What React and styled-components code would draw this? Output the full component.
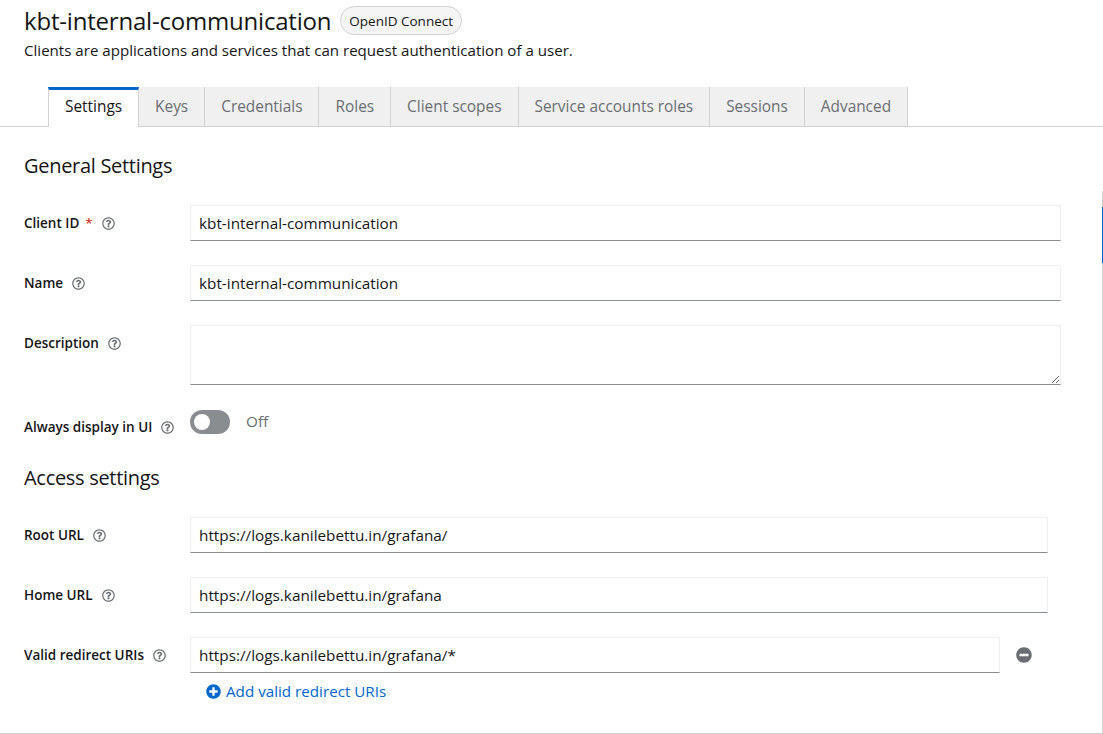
import React from 'react';
import styled, { createGlobalStyle } from 'styled-components';
import { FaRegQuestionCircle, FaMinusCircle, FaPlusCircle } from 'react-icons/fa';

const GlobalStyle = createGlobalStyle`
  html, body {
    margin: 0;
    padding: 0;
    background: #fff;
    font-family: "Open Sans", "Liberation Sans", sans-serif;
    color: #151515;
  }
  * { box-sizing: border-box; }
`;

const Page = styled.div`
  width: 1103px;
  height: 734px;
  overflow: hidden;
  display: flex;
  flex-direction: column;
`;

const Header = styled.div`
  padding: 6px 24px 0;
`;

const TitleRow = styled.div`
  display: flex;
  align-items: center;
  gap: 9px;
`;

const Title = styled.h1`
  margin: 0;
  font-size: 24px;
  font-weight: 400;
  line-height: 29px;
  letter-spacing: -0.2px;
`;

const Badge = styled.span`
  display: inline-flex;
  align-items: center;
  height: 29px;
  padding: 0 8px;
  border: 1px solid #d2d2d2;
  border-radius: 30px;
  background: #f5f5f5;
  font-size: 13.5px;
  color: #151515;
`;

const Subtitle = styled.p`
  margin: 5px 0 0;
  font-size: 15.1px;
  line-height: 21px;
`;

const TabList = styled.div`
  display: flex;
  margin-top: 26px;
  padding-left: 48px;
  border-bottom: 1px solid #d2d2d2;
`;

const Tab = styled.div`
  display: flex;
  align-items: center;
  padding: 0 16px;
  font-size: 15.4px;
  background: ${({ $active }) => ($active ? '#fff' : '#f0f0f0')};
  color: ${({ $active }) => ($active ? '#151515' : '#6a6e73')};
  border-right: 1px solid #d2d2d2;
  border-left: ${({ $active }) => ($active ? '1px solid #d2d2d2' : 'none')};
  border-top: ${({ $active }) => ($active ? '3px solid #0066cc' : 'none')};
  padding-bottom: ${({ $active }) => ($active ? '4px' : '0')};
  margin-bottom: ${({ $active }) => ($active ? '-1px' : '0')};
  height: ${({ $active }) => ($active ? '40px' : '39px')};
`;

const Body = styled.div`
  flex: 1;
  display: flex;
  border-bottom: 1px solid #d2d2d2;
  min-height: 0;
`;

const Main = styled.div`
  flex: 1;
  padding: 24px 41px 0 24px;
`;

const JumpNav = styled.div`
  width: 1px;
  margin-top: 64px;
  background: #d2d2d2;
`;

const JumpActive = styled.div`
  margin-top: 16px;
  height: 56px;
  background: #0066cc;
`;

const Section = styled.section`
  padding-right: ${({ $inset }) => $inset || 0}px;
  & + & {
    margin-top: 25px;
  }
`;

const SectionTitle = styled.h2`
  margin: 0 0 24px;
  font-size: 20px;
  font-weight: 400;
  line-height: 30px;
  letter-spacing: -0.3px;
`;

const Form = styled.div`
  display: grid;
  grid-template-columns: 166px 1fr;
  row-gap: 24px;
`;

const Label = styled.div`
  display: flex;
  align-items: center;
  gap: 9px;
  padding-top: 8px;
  font-size: 13.5px;
  font-weight: 600;
  line-height: 21px;
  align-self: start;
`;

const Required = styled.span`
  color: #c9190b;
  margin-left: -1px;
  font-weight: 400;
`;

const Help = styled(FaRegQuestionCircle)`
  color: #6a6e73;
  width: 13px;
  height: 13px;
`;

const Field = styled.div`
  display: flex;
  flex-direction: column;
  align-items: flex-start;
`;

const InputRow = styled.div`
  display: flex;
  align-items: center;
  width: 100%;
`;

const Input = styled.input`
  width: 100%;
  height: 36px;
  padding: 6px 8px;
  border: 1px solid #f0f0f0;
  border-bottom-color: #8a8d90;
  font: inherit;
  font-size: 15.3px;
  color: #151515;
  outline: none;
  background: #fff;
`;

const TextArea = styled.textarea`
  width: 100%;
  height: 60px;
  padding: 6px 8px;
  border: 1px solid #f0f0f0;
  border-bottom-color: #8a8d90;
  font: inherit;
  font-size: 15.3px;
  resize: vertical;
  outline: none;
  display: block;
`;

const RemoveButton = styled.button`
  flex: 0 0 48px;
  height: 36px;
  border: none;
  background: none;
  display: flex;
  align-items: center;
  justify-content: center;
  color: #6a6e73;
  padding: 0;
`;

const AddLink = styled.button`
  display: flex;
  align-items: center;
  gap: 5px;
  padding: 6px 16px;
  border: none;
  background: none;
  color: #0066cc;
  font: inherit;
  font-size: 15.2px;
  line-height: 24px;
`;

const ToggleWrap = styled.div`
  display: flex;
  align-items: center;
  gap: 16px;
  height: 24px;
  margin-top: 1px;
`;

const Track = styled.span`
  width: 40px;
  height: 24px;
  border-radius: 24px;
  background: #8a8d90;
  display: flex;
  align-items: center;
  padding: 0 4px;
`;

const Knob = styled.span`
  width: 16px;
  height: 16px;
  border-radius: 50%;
  background: #fff;
`;

const ToggleText = styled.span`
  font-size: 15.3px;
  color: #6a6e73;
  margin-top: -2px;
`;

const FieldLabel = ({ children, required }) => (
  <Label>
    <span>
      {children}
      {required && <Required> &nbsp;*</Required>}
    </span>
    <Help />
  </Label>
);

const tabs = ['Settings', 'Keys', 'Credentials', 'Roles', 'Client scopes', 'Service accounts roles', 'Sessions', 'Advanced'];

const App = () => (
  <Page>
    <GlobalStyle />
    <Header>
      <TitleRow>
        <Title>kbt-internal-communication</Title>
        <Badge>OpenID Connect</Badge>
      </TitleRow>
      <Subtitle>Clients are applications and services that can request authentication of a user.</Subtitle>
    </Header>
    <TabList>
      {tabs.map((t, i) => (
        <Tab key={t} $active={i === 0}>{t}</Tab>
      ))}
    </TabList>
    <Body>
      <Main>
        <Section>
          <SectionTitle>General Settings</SectionTitle>
          <Form>
            <FieldLabel required>Client ID</FieldLabel>
            <Field><Input defaultValue="kbt-internal-communication" /></Field>
            <FieldLabel>Name</FieldLabel>
            <Field><Input defaultValue="kbt-internal-communication" /></Field>
            <FieldLabel>Description</FieldLabel>
            <Field><TextArea /></Field>
            <FieldLabel>Always display in UI</FieldLabel>
            <Field>
              <ToggleWrap>
                <Track><Knob /></Track>
                <ToggleText>Off</ToggleText>
              </ToggleWrap>
            </Field>
          </Form>
        </Section>
        <Section $inset={13}>
          <SectionTitle>Access settings</SectionTitle>
          <Form>
            <FieldLabel>Root URL</FieldLabel>
            <Field><Input defaultValue="https://logs.kanilebettu.in/grafana/" /></Field>
            <FieldLabel>Home URL</FieldLabel>
            <Field><Input defaultValue="https://logs.kanilebettu.in/grafana" /></Field>
            <FieldLabel>Valid redirect URIs</FieldLabel>
            <Field>
              <InputRow>
                <Input defaultValue="https://logs.kanilebettu.in/grafana/*" />
                <RemoveButton><FaMinusCircle size={16} /></RemoveButton>
              </InputRow>
              <AddLink><FaPlusCircle size={15} />Add valid redirect URIs</AddLink>
            </Field>
          </Form>
        </Section>
      </Main>
      <JumpNav>
        <JumpActive />
      </JumpNav>
    </Body>
  </Page>
);

export default App;
